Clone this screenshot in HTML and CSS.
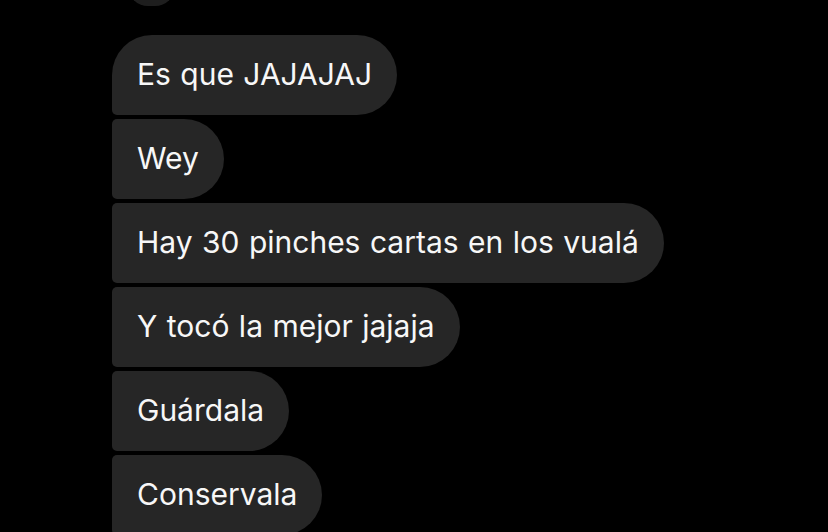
FILE: index.html
```html
<!DOCTYPE html>
<html lang="es">
<head>
<meta charset="utf-8">
<link rel="stylesheet" href="styles.css">
</head>
<body>
<div class="thread">
  <div class="prev"></div>
  <div class="group">
    <div class="bubble first">Es que JAJAJAJ</div>
    <div class="bubble">Wey</div>
    <div class="bubble">Hay 30 pinches cartas en los vualá</div>
    <div class="bubble">Y tocó la mejor jajaja</div>
    <div class="bubble">Guárdala</div>
    <div class="bubble">Conservala</div>
  </div>
</div>
</body>
</html>
```

FILE: styles.css
```css
html, body {
  margin: 0;
  padding: 0;
  background: #000;
  height: 100%;
  overflow: hidden;
}
.thread {
  padding-left: 112px;
  display: flex;
  flex-direction: column;
  align-items: flex-start;
}
.prev {
  margin-left: 16px;
  margin-top: -34px;
  width: 47px;
  height: 40px;
  border-radius: 24px;
  background: #1e1e1e;
}
.group {
  margin-top: 29px;
  display: flex;
  flex-direction: column;
  align-items: flex-start;
  gap: 4px;
}
.bubble {
  box-sizing: border-box;
  height: 80px;
  display: flex;
  align-items: center;
  padding: 0 25px 2px 25px;
  background: #262626;
  color: #f7f7f7;
  font-family: Inter, "Noto Sans", sans-serif;
  font-size: 30px;
  word-spacing: 1px;
  border-radius: 5px 40px 40px 5px;
  white-space: nowrap;
}
.bubble.first {
  border-radius: 40px 40px 40px 5px;
}
```
